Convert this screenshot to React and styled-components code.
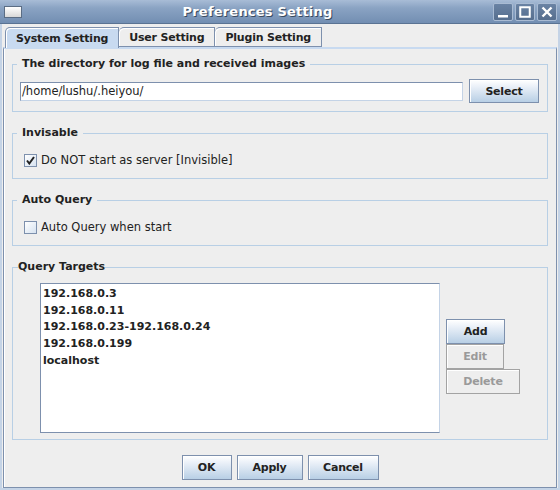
import React, { useState } from 'react';
import styled, { createGlobalStyle } from 'styled-components';

const GlobalStyle = createGlobalStyle`
  html, body {
    margin: 0;
    padding: 0;
    background: #eeeeee;
  }
  * {
    box-sizing: border-box;
  }
`;

const Window = styled.div`
  width: 560px;
  height: 490px;
  display: flex;
  flex-direction: column;
  background: #eeeeee;
  border-left: 2px solid #c4d3e6;
  border-right: 2px solid #c4d3e6;
  border-bottom: 2px solid #c4d3e6;
  font-family: "DejaVu Sans", "Liberation Sans", sans-serif;
`;

const TitleBar = styled.div`
  height: 24px;
  margin: 0 -2px;
  display: flex;
  align-items: center;
  padding: 0 3px 0 4px;
  background: linear-gradient(#a8bcd6 0%, #8aa3c3 35%, #728eb2 100%);
  border-bottom: 1px solid #5a7393;
`;

const AppIcon = styled.div`
  width: 18px;
  height: 12px;
  border: 1px solid #5b6d84;
  background: linear-gradient(#ffffff, #d8d8d8);
`;

const Title = styled.div`
  flex: 1;
  text-align: center;
  color: #ffffff;
  font-weight: bold;
  font-size: 13px;
  letter-spacing: 0.2px;
  text-shadow: 1px 1px 0 #3a4a5e;
`;

const Controls = styled.div`
  display: flex;
  gap: 2px;
`;

const ControlButton = styled.div`
  width: 20px;
  height: 18px;
  border: 1px solid #a9bbd3;
  border-radius: 2px;
  background: linear-gradient(#6a83a4, #566e8e);
  display: flex;
  align-items: center;
  justify-content: center;
`;

const Body = styled.div`
  flex: 1;
  display: flex;
  flex-direction: column;
  padding: 3px 1px 0 1px;
`;

const TabRow = styled.div`
  display: flex;
  padding-left: 2px;
  height: 20px;
  position: relative;
  z-index: 1;
`;

const Tab = styled.div`
  height: ${({ $active }) => ($active ? '21px' : '20px')};
  padding: 0 ${({ $pad }) => $pad}px;
  display: flex;
  align-items: center;
  font-size: 11px;
  font-weight: bold;
  letter-spacing: -0.2px;
  color: #222222;
  background: ${({ $active }) => ($active ? '#c8daf0' : '#eeeeee')};
  border: 1px solid #7d90ad;
  border-bottom: ${({ $active }) => ($active ? 'none' : '1px solid #7d90ad')};
  border-left: ${({ $first }) => ($first ? '1px solid #7d90ad' : 'none')};
  border-top-left-radius: 5px;
  box-shadow: inset 1px 1px 0 #ffffff;
`;

const Panel = styled.div`
  flex: 1;
  display: flex;
  flex-direction: column;
  border: 1px solid #7d90ad;
  border-top: 2px solid #c8daf0;
  box-shadow: inset 1px 0 0 #ffffff;
  padding: 8px 8px 7px 8px;
  gap: 14px;
`;

const Group = styled.fieldset`
  margin: 0;
  min-width: 0;
  border: 1px solid #b8cfe5;
  padding: ${({ $pad }) => $pad};
  display: flex;
  flex-direction: ${({ $column }) => ($column ? 'column' : 'row')};
`;

const Legend = styled.legend`
  font-size: 11px;
  font-weight: bold;
  color: #222222;
  padding: 0 ${({ $gap }) => $gap}px;
  margin-left: ${({ $indent }) => $indent}px;
  line-height: 14px;
`;

const PathRow = styled.div`
  display: flex;
  align-items: center;
  gap: 6px;
  width: 100%;
  padding-left: 7px;
`;

const TextField = styled.div`
  flex: 1;
  height: 19px;
  background: #ffffff;
  border: 1px solid #7d90ad;
  border-right-color: #c4d3e6;
  border-bottom-color: #c4d3e6;
  font-size: 11.5px;
  color: #222222;
  padding: 0 1px;
  display: flex;
  align-items: center;
`;

const Button = styled.button`
  width: ${({ $w }) => $w}px;
  height: ${({ $h }) => $h || 25}px;
  font-family: "DejaVu Sans", "Liberation Sans", sans-serif;
  font-size: 11px;
  font-weight: bold;
  letter-spacing: -0.2px;
  padding: 0;
  color: ${({ disabled }) => (disabled ? '#9a9a9a' : '#222222')};
  background: ${({ disabled }) =>
    disabled ? '#eeeeee' : 'linear-gradient(#ffffff 0%, #eaf0f8 30%, #b8cfe5 100%)'};
  border: 1px solid ${({ disabled }) => (disabled ? '#a3a3a3' : '#7d90ad')};
  box-shadow: inset 1px 1px 0 #ffffff;
  cursor: default;
`;

const CheckRow = styled.label`
  display: flex;
  align-items: center;
  gap: 4px;
  font-size: 11.5px;
  color: #222222;
  padding-left: 11px;
`;

const CheckBox = styled.span`
  width: 13px;
  height: 13px;
  border: 1px solid #7d90ad;
  background: linear-gradient(135deg, #ffffff 0%, #d6e2f0 100%);
  display: flex;
  align-items: center;
  justify-content: center;
`;

const TargetsArea = styled.div`
  display: flex;
  align-items: flex-start;
  gap: 6px;
  padding-left: 27px;
`;

const TargetList = styled.ul`
  list-style: none;
  margin: 0;
  width: 400px;
  height: 150px;
  padding: 2px 0 0 1px;
  background: #ffffff;
  border: 1px solid #7d90ad;
  border-right-color: #c4d3e6;
  border-bottom-color: #7d90ad;
`;

const TargetItem = styled.li`
  font-size: 11px;
  font-weight: bold;
  line-height: 16.7px;
  color: #222222;
  padding-left: 1px;
`;

const SideButtons = styled.div`
  display: flex;
  flex-direction: column;
  align-items: flex-start;
  margin-top: 36px;
`;

const Footer = styled.div`
  display: flex;
  justify-content: center;
  gap: 5px;
  margin-top: auto;
`;

const targets = [
  '192.168.0.3',
  '192.168.0.11',
  '192.168.0.23-192.168.0.24',
  '192.168.0.199',
  'localhost',
];

function Check({ on }) {
  return on ? (
    <svg width="9" height="9" viewBox="0 0 9 9">
      <path d="M1 4.5 L3.3 7.5 L8 1" fill="none" stroke="#222222" strokeWidth="2" />
    </svg>
  ) : null;
}

export default function App() {
  const [invisible, setInvisible] = useState(true);
  const [autoQuery, setAutoQuery] = useState(false);

  return (
    <>
      <GlobalStyle />
      <Window>
        <TitleBar>
          <AppIcon />
          <Title>Preferences Setting</Title>
          <Controls>
            <ControlButton>
              <svg width="12" height="12" viewBox="0 0 12 12">
                <rect x="1" y="9" width="10" height="2.5" fill="#ffffff" />
              </svg>
            </ControlButton>
            <ControlButton>
              <svg width="12" height="12" viewBox="0 0 12 12">
                <rect x="1.25" y="1.25" width="9.5" height="9.5" fill="none" stroke="#ffffff" strokeWidth="2" />
              </svg>
            </ControlButton>
            <ControlButton>
              <svg width="12" height="12" viewBox="0 0 12 12">
                <path d="M1.5 1.5 L10.5 10.5 M10.5 1.5 L1.5 10.5" stroke="#ffffff" strokeWidth="2.4" />
              </svg>
            </ControlButton>
          </Controls>
        </TitleBar>
        <Body>
          <TabRow>
            <Tab $active $first $pad={10}>System Setting</Tab>
            <Tab $pad={10}>User Setting</Tab>
            <Tab $pad={10}>Plugin Setting</Tab>
          </TabRow>
          <Panel>
            <Group $pad="8px 8px 8px 0">
              <Legend $indent={4} $gap={5}>The directory for log file and received images</Legend>
              <PathRow>
                <TextField>/home/lushu/.heiyou/</TextField>
                <Button $w={70} $h={24}>Select</Button>
              </PathRow>
            </Group>
            <Group $pad="13px 8px 11px 0">
              <Legend $indent={4} $gap={5}>Invisable</Legend>
              <CheckRow onClick={() => setInvisible(!invisible)}>
                <CheckBox>
                  <Check on={invisible} />
                </CheckBox>
                Do NOT start as server [Invisible]
              </CheckRow>
            </Group>
            <Group $pad="13px 8px 11px 0">
              <Legend $indent={4} $gap={5}>Auto Query</Legend>
              <CheckRow onClick={() => setAutoQuery(!autoQuery)}>
                <CheckBox>
                  <Check on={autoQuery} />
                </CheckBox>
                Auto Query when start
              </CheckRow>
            </Group>
            <Group $pad="9px 8px 6px 0" $column>
              <Legend $indent={5} $gap={0}>Query Targets</Legend>
              <TargetsArea>
                <TargetList>
                  {targets.map(t => (
                    <TargetItem key={t}>{t}</TargetItem>
                  ))}
                </TargetList>
                <SideButtons>
                  <Button $w={59}>Add</Button>
                  <Button $w={58} disabled>Edit</Button>
                  <Button $w={74} disabled>Delete</Button>
                </SideButtons>
              </TargetsArea>
            </Group>
            <Footer>
              <Button $w={50}>OK</Button>
              <Button $w={66}>Apply</Button>
              <Button $w={71}>Cancel</Button>
            </Footer>
          </Panel>
        </Body>
      </Window>
    </>
  );
}
